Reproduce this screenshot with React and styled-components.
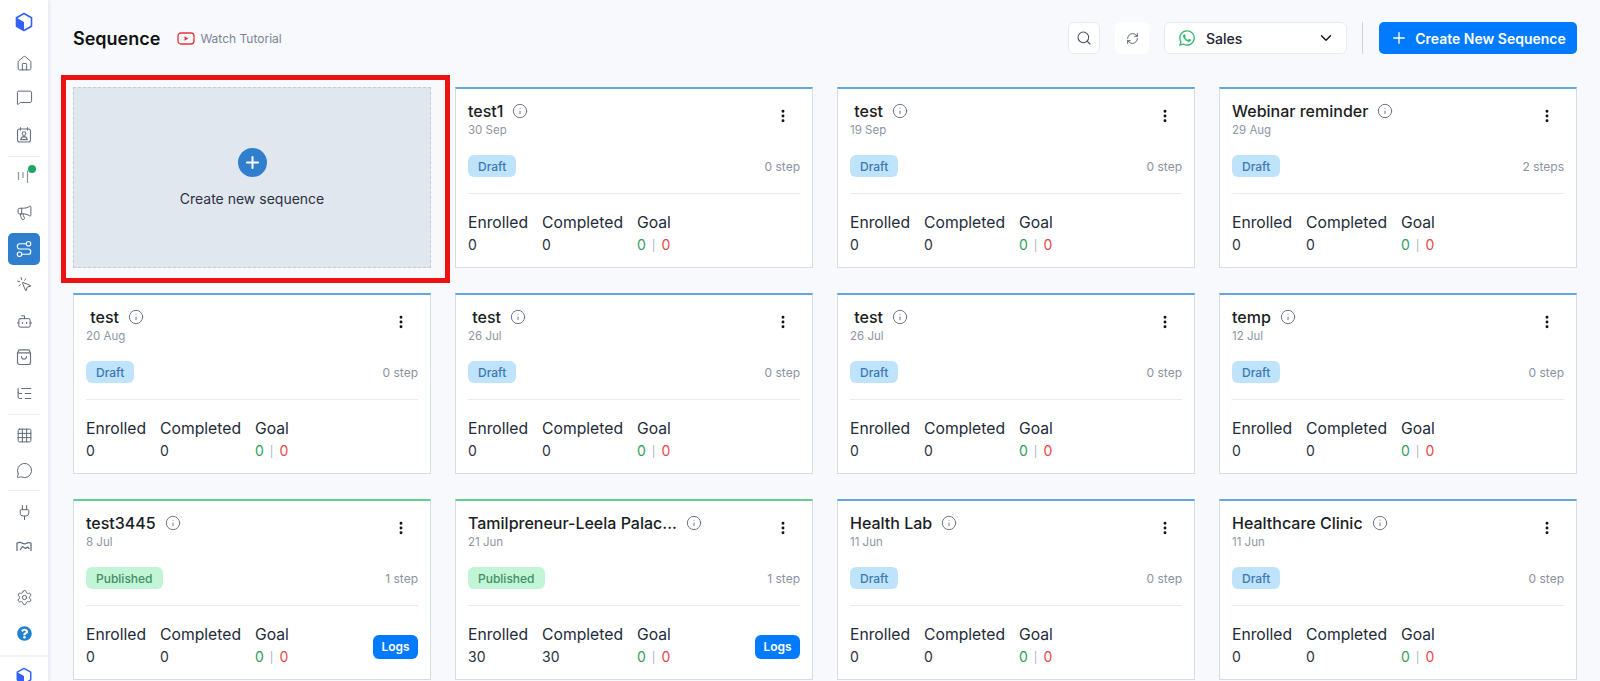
import styled, { createGlobalStyle } from 'styled-components';
import {
  Home, MessageSquare, Megaphone, Route, MousePointerClick, Bot,
  ListTree, Grid3x3, MessageCircle, Plug, Settings, Search, RefreshCw, ChevronDown,
  Plus, Info, EllipsisVertical,
} from 'lucide-react';
import { FaWhatsapp, FaQuestionCircle } from 'react-icons/fa';

const sequences = [
  { name: 'test1', date: '30 Sep', steps: '0 step' },
  { name: ' test', date: '19 Sep', steps: '0 step' },
  { name: 'Webinar reminder', date: '29 Aug', steps: '2 steps' },
  { name: ' test', date: '20 Aug', steps: '0 step' },
  { name: ' test', date: '26 Jul', steps: '0 step' },
  { name: ' test', date: '26 Jul', steps: '0 step' },
  { name: 'temp', date: '12 Jul', steps: '0 step' },
  { name: 'test3445', date: '8 Jul', steps: '1 step', published: true },
  { name: 'Tamilpreneur-Leela Palac...', date: '21 Jun', steps: '1 step', published: true, enrolled: 30, completed: 30 },
  { name: 'Health Lab', date: '11 Jun', steps: '0 step' },
  { name: 'Healthcare Clinic', date: '11 Jun', steps: '0 step' },
];

const GlobalStyle = createGlobalStyle`
  html, body {
    margin: 0;
    height: 100%;
    overflow: hidden;
    background: #f7f9fc;
    font-family: Inter, "Liberation Sans", sans-serif;
  }
  * { box-sizing: border-box; }
`;

const Page = styled.div`
  display: flex;
  height: 681px;
  overflow: hidden;
`;

const Sidebar = styled.nav`
  width: 48px;
  flex: none;
  height: 681px;
  background: #fff;
  box-shadow: 1px 0 4px rgba(120, 135, 160, 0.18);
  display: flex;
  flex-direction: column;
  align-items: center;
  padding-top: 4px;
  overflow: hidden;
`;

const NavItem = styled.div`
  width: 32px;
  height: 32px;
  flex: none;
  margin-top: ${(p) => p.$top ?? 4}px;
  border-radius: 5px;
  display: flex;
  align-items: center;
  justify-content: center;
  position: relative;
  color: ${(p) => (p.$active ? '#fff' : '#5d6675')};
  background: ${(p) => (p.$active ? '#2f7fce' : 'transparent')};
`;

const NavDivider = styled.div`
  width: 32px;
  height: 1px;
  flex: none;
  background: #e9edf2;
  margin-top: ${(p) => p.$top ?? 4}px;
`;

const Dot = styled.span`
  position: absolute;
  top: 5px;
  right: 4px;
  width: 8px;
  height: 8px;
  border-radius: 50%;
  background: #22a565;
`;

const Footer = styled.div`
  width: 48px;
  flex: none;
  margin-top: 6px;
  padding-top: 10px;
  border-top: 2px solid #f0f2f6;
  display: flex;
  justify-content: center;
`;

const Main = styled.main`
  flex: 1;
  min-width: 0;
  padding: 22px 23px 0 25px;
`;

const Header = styled.header`
  display: flex;
  align-items: center;
  height: 32px;
  margin-bottom: 33px;
`;

const Title = styled.h1`
  margin: 0;
  font-size: 18px;
  font-weight: 600;
  color: #111;
`;

const Tutorial = styled.a`
  display: flex;
  align-items: center;
  gap: 5px;
  margin-left: 17px;
  font-size: 12px;
  color: #7c8496;
`;

const Actions = styled.div`
  margin-left: auto;
  display: flex;
  align-items: center;
`;

const IconButton = styled.button`
  width: ${(p) => p.$w || 32}px;
  height: 32px;
  padding: 0;
  margin-right: ${(p) => p.$gap || 15}px;
  border: 1px solid ${(p) => (p.$plain ? 'transparent' : '#e7ebf1')};
  border-radius: 6px;
  background: #fff;
  color: #474f5e;
  display: flex;
  align-items: center;
  justify-content: center;
`;

const Select = styled.div`
  width: 183px;
  height: 32px;
  padding: 0 11px 0 13px;
  border: 1px solid #e7ebf1;
  border-radius: 6px;
  background: #fff;
  display: flex;
  align-items: center;
  gap: 10px;
  font-size: 14px;
  font-weight: 500;
  color: #1d2433;
  svg:last-child { margin-left: auto; color: #111; }
`;

const Separator = styled.div`
  width: 1px;
  height: 32px;
  background: #ced4dc;
  margin: 0 16px 0 15px;
`;

const PrimaryButton = styled.button`
  width: 198px;
  height: 32px;
  border: 0;
  border-radius: 5px;
  background: #007bff;
  color: #fff;
  font: 600 14px Inter, "Liberation Sans", sans-serif;
  display: flex;
  align-items: center;
  justify-content: center;
  gap: 7px;
`;

const Grid = styled.div`
  display: grid;
  grid-template-columns: repeat(4, 358px);
  grid-auto-rows: 181px;
  column-gap: 24px;
  row-gap: 25px;
`;

const CreateCard = styled.div`
  position: relative;
  background: #e1e7ef;
  border: 1px dashed #c3ccd8;
  display: flex;
  flex-direction: column;
  align-items: center;
  padding-top: 60px;
  gap: 13px;
  font-size: 14px;
  color: #2a3140;

  &::after {
    content: '';
    position: absolute;
    left: -13px;
    top: -13px;
    right: -20px;
    bottom: -16px;
    border: 5px solid #ed1111;
    pointer-events: none;
  }
`;

const PlusCircle = styled.span`
  width: 29px;
  height: 29px;
  border-radius: 50%;
  background: #2f7fce;
  color: #fff;
  display: flex;
  align-items: center;
  justify-content: center;
`;

const Card = styled.article`
  background: #fff;
  border: 1px solid #d5dce8;
  border-top: 2px solid ${(p) => (p.$published ? '#5fcf92' : '#64a6dd')};
  padding: 12px 12px 0 12px;
  display: flex;
  flex-direction: column;
`;

const CardTop = styled.div`
  display: flex;
  align-items: flex-start;
  height: 54px;
`;

const Name = styled.div`
  display: flex;
  align-items: center;
  gap: 9px;
  font-size: 16px;
  line-height: 20px;
  font-weight: 500;
  color: #1a1d24;
  white-space: pre;
  svg { color: #6d7688; }
`;

const DateText = styled.div`
  font-size: 11.5px;
  line-height: 16px;
  margin-top: 1px;
  color: #8e95a3;
`;

const Kebab = styled.span`
  margin-left: auto;
  margin-top: 7px;
  margin-right: 9px;
  color: #111;
  display: flex;
`;

const StatusRow = styled.div`
  display: flex;
  align-items: center;
  justify-content: space-between;
  height: 22px;
`;

const Badge = styled.span`
  height: 22px;
  padding: 0 10px;
  border-radius: 6px;
  display: flex;
  align-items: center;
  font-size: 12px;
  font-weight: 500;
  background: ${(p) => (p.$published ? '#c2f4d6' : '#bfe3fa')};
  color: ${(p) => (p.$published ? '#3f8f66' : '#3c78b4')};
`;

const Steps = styled.span`
  font-size: 12px;
  color: #8b92a1;
`;

const Rule = styled.hr`
  margin: 16px 0 0;
  border: 0;
  border-top: 1px solid #e8ebf0;
`;

const Stats = styled.div`
  display: flex;
  align-items: flex-start;
  margin-top: 19px;
`;

const Stat = styled.div`
  margin-right: 14px;
`;

const Label = styled.div`
  font-size: 15.7px;
  line-height: 20px;
  color: #232a38;
`;

const Value = styled.div`
  font-size: 14px;
  line-height: 20px;
  margin-top: 2px;
  color: #2a3140;
`;

const Pass = styled.span`color: #2f9e63;`;
const Fail = styled.span`color: #e5484d;`;
const Pipe = styled.span`
  color: #a9b1bd;
  margin: 0 6px;
  font-size: 11px;
`;

const LogsButton = styled.button`
  margin-left: auto;
  align-self: center;
  width: 45px;
  height: 24px;
  padding: 0;
  border: 0;
  border-radius: 6px;
  background: #007bff;
  color: #fff;
  font: 600 12px Inter, "Liberation Sans", sans-serif;
`;

const Logo = ({ size = 20 }) => (
  <svg width={size} height={size} viewBox="0 0 20 20">
    <path d="M10 1.500l7.500 4.200v8.600L10 18.500l-7.500-4.200V5.700z" fill="#fff" stroke="#2f62f5" strokeWidth="1.6" strokeLinejoin="round" />
    <path d="M2.500 5.700L10 10v8.500l-7.500-4.200z" fill="#2f62f5" />
  </svg>
);

const PipelineIcon = () => (
  <svg width="18" height="18" viewBox="0 0 18 18" fill="none" stroke="#8b93a1" strokeWidth="1.2">
    <path d="M3.500 5v8M8 5v6M12.500 3.500V16" />
  </svg>
);

const ContactIcon = () => (
  <svg width="18" height="18" viewBox="0 0 18 18" fill="none" stroke="#6b7382" strokeWidth="1.1" strokeLinecap="round">
    <rect x="2.500" y="3" width="13" height="13" rx="2" />
    <path d="M5.500 1.500V4M12.500 1.500V4" />
    <circle cx="9" cy="7.600" r="1.900" />
    <path d="M5.800 13.600c.4-2 1.600-3 3.200-3s2.800 1 3.200 3z" />
  </svg>
);

const BagIcon = () => (
  <svg width="18" height="18" viewBox="0 0 18 18" fill="none" stroke="#6b7382" strokeWidth="1.2" strokeLinecap="round">
    <path d="M4 1.800h10l1.500 3v9.700a2 2 0 0 1-2 2h-9a2 2 0 0 1-2-2V4.800z" />
    <path d="M2.500 4.800h13" />
    <path d="M6.500 8.500c.3 1.900 1.300 2.700 2.500 2.700s2.200-.8 2.500-2.700" />
  </svg>
);

const MapIcon = () => (
  <svg width="18" height="18" viewBox="0 0 18 18" fill="none" stroke="#5d6675" strokeWidth="1.2" strokeLinejoin="round">
    <path d="M2 14V6c2-1 3.500-1 5 0s3.500 1 4.500 .3 2.500-.8 4.500-.3v8" />
    <path d="M5 13l2.500-3.500 3 2 2-1.500 2 2" />
  </svg>
);

const SequenceCard = ({ item }) => (
  <Card $published={item.published}>
    <CardTop>
      <div>
        <Name>
          {item.name}
          <Info size={16} strokeWidth={1.5} />
        </Name>
        <DateText>{item.date}</DateText>
      </div>
      <Kebab><EllipsisVertical size={16} strokeWidth={2.4} /></Kebab>
    </CardTop>
    <StatusRow>
      <Badge $published={item.published}>{item.published ? 'Published' : 'Draft'}</Badge>
      <Steps>{item.steps}</Steps>
    </StatusRow>
    <Rule />
    <Stats>
      <Stat>
        <Label>Enrolled</Label>
        <Value>{item.enrolled || 0}</Value>
      </Stat>
      <Stat>
        <Label>Completed</Label>
        <Value>{item.completed || 0}</Value>
      </Stat>
      <Stat>
        <Label>Goal</Label>
        <Value><Pass>0</Pass><Pipe>|</Pipe><Fail>0</Fail></Value>
      </Stat>
      {item.published && <LogsButton>Logs</LogsButton>}
    </Stats>
  </Card>
);

const App = () => (
  <Page>
    <GlobalStyle />
    <Sidebar>
      <NavItem $top={2}><Logo /></NavItem>
      <NavItem $top={9}><Home size={17} strokeWidth={1.4} /></NavItem>
      <NavItem $top={2}><MessageSquare size={17} strokeWidth={1.4} /></NavItem>
      <NavItem $top={6}><ContactIcon /></NavItem>
      <NavDivider $top={5} />
      <NavItem $top={3}><PipelineIcon /><Dot /></NavItem>
      <NavItem $top={4}><Megaphone size={17} strokeWidth={1.4} /></NavItem>
      <NavItem $active $top={5}><Route size={18} strokeWidth={1.5} /></NavItem>
      <NavItem $top={3}><MousePointerClick size={17} strokeWidth={1.4} /></NavItem>
      <NavItem $top={5}><Bot size={17} strokeWidth={1.4} /></NavItem>
      <NavItem><BagIcon /></NavItem>
      <NavItem><ListTree size={17} strokeWidth={1.4} /></NavItem>
      <NavDivider $top={5} />
      <NavItem><Grid3x3 size={17} strokeWidth={1.4} /></NavItem>
      <NavItem $top={3}><MessageCircle size={17} strokeWidth={1.4} /></NavItem>
      <NavDivider />
      <NavItem $top={5}><Plug size={17} strokeWidth={1.4} /></NavItem>
      <NavItem $top={2}><MapIcon /></NavItem>
      <NavItem $top={19}><Settings size={17} strokeWidth={1.4} /></NavItem>
      <NavItem $top={4}><FaQuestionCircle size={15} color="#1f7fd1" /></NavItem>
      <Footer><Logo size={18} /></Footer>
    </Sidebar>
    <Main>
      <Header>
        <Title>Sequence</Title>
        <Tutorial>
          <svg width="18" height="13" viewBox="0 0 18 13" fill="none">
            <rect x="1" y="1" width="16" height="11" rx="3" stroke="#e5343a" strokeWidth="1.3" />
            <path d="M7.500 4.200v4.600l3.800-2.300z" fill="#e5343a" />
          </svg>
          Watch Tutorial
        </Tutorial>
        <Actions>
          <IconButton><Search size={16} strokeWidth={1.6} /></IconButton>
          <IconButton $plain $w={34}><RefreshCw size={13} strokeWidth={1.6} /></IconButton>
          <Select>
            <FaWhatsapp size={18} color="#2fb86a" />
            Sales
            <ChevronDown size={18} strokeWidth={1.8} />
          </Select>
          <Separator />
          <PrimaryButton><Plus size={18} strokeWidth={1.8} />Create New Sequence</PrimaryButton>
        </Actions>
      </Header>
      <Grid>
        <CreateCard>
          <PlusCircle><Plus size={19} strokeWidth={2.6} /></PlusCircle>
          Create new sequence
        </CreateCard>
        {sequences.map((item, i) => (
          <SequenceCard key={i} item={item} />
        ))}
      </Grid>
    </Main>
  </Page>
);

export default App;
